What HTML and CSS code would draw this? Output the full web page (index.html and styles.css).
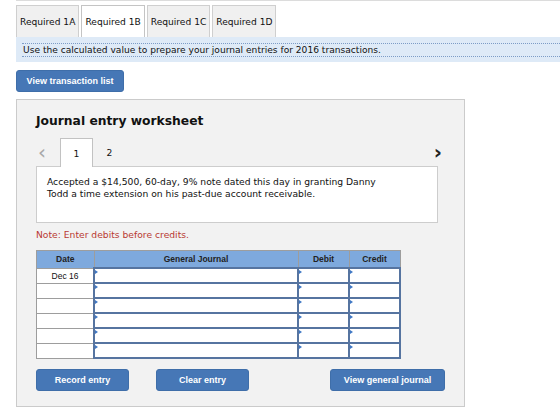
FILE: index.html
```html
<!DOCTYPE html>
<html>
  <head>
    <title>Journal entry worksheet</title>
    <link rel="stylesheet" href="styles.css">
  </head>
  <body>
    <div class="page">
      <div class="req-tabs">
        <div class="req-tab">Required 1A</div>
        <div class="req-tab active">Required 1B</div>
        <div class="req-tab">Required 1C</div>
        <div class="req-tab">Required 1D</div>
      </div>
      <div class="instr">
        <div class="instr-text">Use the calculated value to prepare your journal entries for 2016 transactions.</div>
      </div>
      <button class="btn btn-list">View transaction list</button>

      <div class="panel">
        <h2 class="panel-title">Journal entry worksheet</h2>
        <div class="entry-nav">
          <span class="arrow prev">&lsaquo;</span>
          <div class="entry-tab active">1</div>
          <div class="entry-tab">2</div>
          <span class="arrow next">&rsaquo;</span>
        </div>
        <div class="entry-desc">
          Accepted a $14,500, 60-day, 9% note dated this day in granting Danny<br>
          Todd a time extension on his past-due account receivable.
        </div>
        <div class="note">Note: Enter debits before credits.</div>

        <table class="journal">
          <thead>
            <tr>
              <th class="c-date">Date</th>
              <th class="c-acct">General Journal</th>
              <th class="c-amt">Debit</th>
              <th class="c-amt">Credit</th>
            </tr>
          </thead>
          <tbody>
            <tr><td class="c-date">Dec 16</td><td class="inp"></td><td class="inp"></td><td class="inp"></td></tr>
            <tr><td class="c-date"></td><td class="inp"></td><td class="inp"></td><td class="inp"></td></tr>
            <tr><td class="c-date"></td><td class="inp"></td><td class="inp"></td><td class="inp"></td></tr>
            <tr><td class="c-date"></td><td class="inp"></td><td class="inp"></td><td class="inp"></td></tr>
            <tr><td class="c-date"></td><td class="inp"></td><td class="inp"></td><td class="inp"></td></tr>
            <tr><td class="c-date"></td><td class="inp"></td><td class="inp"></td><td class="inp"></td></tr>
          </tbody>
        </table>

        <div class="actions">
          <button class="btn btn-record">Record entry</button>
          <button class="btn btn-clear">Clear entry</button>
          <button class="btn btn-view">View general journal</button>
        </div>
      </div>
    </div>
  </body>
</html>
```

FILE: styles.css
```css
body {
  margin: 0;
  background: #fff;
  font-family: "DejaVu Sans", Verdana, sans-serif;
  color: #111;
}

.page {
  padding-left: 16px;
}

.req-tabs {
  display: flex;
  gap: 2px;
  border-top: 1px solid #dcdcdc;
  padding-top: 4px;
  height: 32px;
  box-sizing: content-box;
}

.req-tab {
  height: 32px;
  box-sizing: border-box;
  padding: 0 3px;
  display: flex;
  align-items: center;
  font-size: 9.1px;
  white-space: nowrap;
  background: #f0f0f0;
  border: 1px solid #cfcfcf;
  border-bottom: none;
}

.req-tab.active {
  background: #fff;
  border-color: #c4c4c4;
}

.instr {
  background: #deeaf7;
  height: 25px;
  display: flex;
  align-items: center;
  padding-left: 6px;
}

.instr-text {
  flex: 1;
  font-size: 9.1px;
  line-height: 12px;
  white-space: nowrap;
  border-top: 1px dotted #7d9cc6;
  border-bottom: 1px dotted #7d9cc6;
  padding-left: 1px;
}

.btn {
  font-family: "Liberation Sans", Arial, sans-serif;
  font-weight: bold;
  font-size: 9px;
  color: #fff;
  background: #4677b6;
  border: 1px solid #3f6ea9;
  border-radius: 3px;
  height: 22px;
  padding: 0;
}

.btn-list {
  display: block;
  margin-top: 8px;
  width: 108px;
}

.panel {
  margin-top: 7px;
  width: 449px;
  height: 308px;
  box-sizing: border-box;
  background: #f2f2f2;
  border: 1px solid #cbcbcb;
  padding: 14px 20px 0 19px;
}

.panel-title {
  margin: 0;
  font-size: 12.3px;
  font-weight: bold;
  line-height: 14px;
}

.entry-nav {
  display: flex;
  align-items: center;
  margin-top: 10px;
  height: 28px;
}

.arrow {
  font-size: 20px;
  line-height: 20px;
}

.prev {
  color: #a8a8a8;
  margin-left: 2px;
  width: 22px;
}

.next {
  margin-left: auto;
  margin-right: 2px;
  color: #222;
  font-weight: bold;
}

.entry-tab {
  width: 33px;
  height: 28px;
  box-sizing: border-box;
  display: flex;
  align-items: center;
  justify-content: center;
  font-size: 9.2px;
}

.entry-tab.active {
  background: #fff;
  border: 1px solid #c2c2c2;
  border-bottom: none;
  height: 29px;
  margin-top: 1px;
}

.entry-desc {
  width: 402px;
  height: 57px;
  box-sizing: border-box;
  background: #fff;
  border: 1px solid #cdcdcd;
  padding: 9px 10px;
  font-size: 9.2px;
  line-height: 12px;
}

.note {
  margin-top: 6px;
  font-size: 9.2px;
  color: #b93a32;
  line-height: 12px;
}

.journal {
  margin-top: 9px;
  border-collapse: collapse;
  font-family: "Liberation Sans", Arial, sans-serif;
  font-size: 8.5px;
  width: 365px;
  border: 1px solid #9d9d9d;
}

.journal th {
  background: #7ea9dd;
  color: #222;
  font-weight: bold;
  height: 16px;
  padding: 0;
  border: 1px solid #9d9d9d;
}

.journal th.c-acct {
  border-left: 1px solid #333;
}

.c-date {
  width: 56px;
}

.c-amt {
  width: 50px;
}

.journal td {
  height: 13px;
  padding: 0;
}

.journal td.c-date {
  background: #fff;
  border: 1px solid #9d9d9d;
  text-align: center;
}

.journal td.inp {
  background: #fff;
  border: 2px solid #5674a0;
  position: relative;
}

.journal td.inp::before {
  content: "";
  position: absolute;
  left: 0;
  top: 1px;
  border-left: 3px solid #3f77c4;
  border-top: 2px solid transparent;
  border-bottom: 2px solid transparent;
}

.actions {
  display: flex;
  margin-top: 10px;
  width: 409px;
}

.btn-record,
.btn-clear {
  width: 93px;
}

.btn-clear {
  margin-left: 27px;
}

.btn-view {
  margin-left: auto;
  width: 115px;
}
```
